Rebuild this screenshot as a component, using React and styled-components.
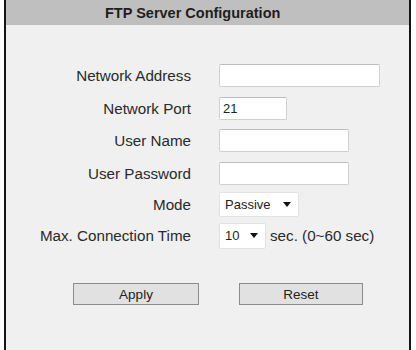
import React from "react";
import styled, { createGlobalStyle } from "styled-components";

const Global = createGlobalStyle`
  html, body { margin: 0; padding: 0; background: #ffffff; }
  body { font-family: "Liberation Sans", Arial, sans-serif; }
`;

const Panel = styled.div`
  margin-left: 4px;
  width: 403px;
  height: 350px;
  border-left: 2px solid #151515;
  border-right: 2px solid #151515;
  background: #f0f0f0;
  display: flex;
  flex-direction: column;
`;

const Header = styled.div`
  height: 25px;
  background: #bfbfbf;
  display: flex;
  align-items: center;
  padding-left: 99px;
  font-weight: bold;
  font-size: 14.5px;
  color: #1e1e1e;
`;

const Form = styled.div`
  margin-top: 34px;
  display: grid;
  grid-template-columns: 185px 1fr;
  column-gap: 28px;
  grid-template-rows: 33px 32px 33px 32px 31px 31px;
  align-items: center;
`;

const Label = styled.div`
  text-align: right;
  font-size: 15.2px;
  color: #2a2a2a;
`;

const Field = styled.div`
  display: flex;
  align-items: center;
  gap: 4px;
`;

const TextInput = styled.input`
  box-sizing: border-box;
  width: ${(p) => p.$w}px;
  height: 23px;
  border: 1px solid #d0d0d0;
  border-top-color: #bdbdbd;
  border-radius: 2px;
  background: #fff;
  padding: 0 3px;
  font-family: "Liberation Sans", Arial, sans-serif;
  font-size: 13px;
  color: #222;
  outline: none;
`;

const Select = styled.div`
  box-sizing: border-box;
  width: ${(p) => p.$w}px;
  height: ${(p) => p.$h}px;
  border: 1px solid #e2e2e2;
  border-radius: 2px;
  background: #fff;
  display: flex;
  align-items: center;
  justify-content: space-between;
  padding: 0 7px 0 5px;
  font-size: 13px;
  color: #222;
`;

const Arrow = styled.span`
  width: 0;
  height: 0;
  border-left: 4.5px solid transparent;
  border-right: 4.5px solid transparent;
  border-top: 5px solid #111;
`;

const Hint = styled.span`
  font-size: 15.2px;
  color: #2a2a2a;
`;

const Buttons = styled.div`
  margin-top: 32px;
  display: flex;
  gap: 40px;
  padding-left: 67px;
`;

const Button = styled.button`
  box-sizing: border-box;
  width: ${(p) => p.$w}px;
  height: 22px;
  background: #e1e1e1;
  border: 1px solid #8c8c8c;
  border-radius: 0;
  font-family: "Liberation Sans", Arial, sans-serif;
  font-size: 13.5px;
  color: #222;
  padding: 0;
`;

export default function App() {
  return (
    <>
      <Global />
      <Panel>
        <Header>FTP Server Configuration</Header>
        <Form>
          <Label>Network Address</Label>
          <Field>
            <TextInput $w={161} defaultValue="" />
          </Field>
          <Label>Network Port</Label>
          <Field>
            <TextInput $w={68} defaultValue="21" />
          </Field>
          <Label>User Name</Label>
          <Field>
            <TextInput $w={130} defaultValue="" />
          </Field>
          <Label>User Password</Label>
          <Field>
            <TextInput $w={130} type="password" defaultValue="" />
          </Field>
          <Label>Mode</Label>
          <Field>
            <Select $w={80} $h={25}>
              <span>Passive</span>
              <Arrow />
            </Select>
          </Field>
          <Label>Max. Connection Time</Label>
          <Field>
            <Select $w={47} $h={26}>
              <span>10</span>
              <Arrow />
            </Select>
            <Hint>sec. (0~60 sec)</Hint>
          </Field>
        </Form>
        <Buttons>
          <Button $w={126}>Apply</Button>
          <Button $w={124}>Reset</Button>
        </Buttons>
      </Panel>
    </>
  );
}
